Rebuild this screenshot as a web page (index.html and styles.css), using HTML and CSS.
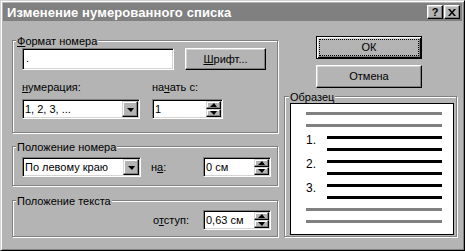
FILE: index.html
```html
<!DOCTYPE html>
<html>
<head>
<meta charset="utf-8">
<link rel="stylesheet" href="styles.css">
</head>
<body>
<div class="window">
  <div class="titlebar">
    <span class="title">Изменение нумерованного списка</span>
    <div class="tb-buttons">
      <span class="tb-btn help">?</span>
      <span class="tb-btn close"><svg width="8" height="7" viewBox="0 0 8 7"><path d="M0 0h2l2 2.5L6 0h2L5 3.5 8 7H6L4 4.5 2 7H0l3-3.5z" fill="#000"/></svg></span>
    </div>
  </div>
  <div class="content">
    <div class="left">
      <div class="group g1">
        <div class="legend"><u>Ф</u>ормат номера</div>
        <div class="row r1">
          <div class="edit fmt">.</div>
          <div class="btn font-btn"><u>Ш</u>рифт...</div>
        </div>
        <div class="row r2">
          <div class="field f-num">
            <div class="label"><u>н</u>умерация:</div>
            <div class="combo c-num"><span class="val">1, 2, 3, ...</span><span class="dd"><i class="tri-down"></i></span></div>
          </div>
          <div class="field f-start">
            <div class="label">на<u>ч</u>ать с:</div>
            <div class="spin s-start"><span class="val">1</span><span class="arrows"><span class="sbtn"><i class="tri-up"></i></span><span class="sbtn"><i class="tri-dn"></i></span></span></div>
          </div>
        </div>
      </div>
      <div class="group g2">
        <div class="legend">Положение номера</div>
        <div class="row r3">
          <div class="combo c-align"><span class="val">По левому краю</span><span class="dd"><i class="tri-down"></i></span></div>
          <div class="inline-label l-na">н<u>а</u>:</div>
          <div class="spin s-pos"><span class="val">0 см</span><span class="arrows"><span class="sbtn"><i class="tri-up"></i></span><span class="sbtn"><i class="tri-dn"></i></span></span></div>
        </div>
      </div>
      <div class="group g3">
        <div class="legend">Положение текста</div>
        <div class="row r4">
          <div class="inline-label l-ind">о<u>т</u>ступ:</div>
          <div class="spin s-pos"><span class="val">0,63 см</span><span class="arrows"><span class="sbtn"><i class="tri-up"></i></span><span class="sbtn"><i class="tri-dn"></i></span></span></div>
        </div>
      </div>
    </div>
    <div class="right">
      <div class="btn default ok"><span class="focus">ОК</span></div>
      <div class="btn cancel">Отмена</div>
      <div class="group sample">
        <div class="legend">Образец</div>
        <div class="preview">
          <div class="pline gray"></div>
          <div class="pline gray"></div>
          <div class="item"><span class="num">1.</span><div class="lines"><div class="pline black"></div><div class="pline black"></div></div></div>
          <div class="item"><span class="num">2.</span><div class="lines"><div class="pline black"></div><div class="pline black"></div></div></div>
          <div class="item"><span class="num">3.</span><div class="lines"><div class="pline black"></div><div class="pline black"></div></div></div>
          <div class="pline gray"></div>
          <div class="pline gray"></div>
        </div>
      </div>
    </div>
  </div>
</div>
</body>
</html>
```
FILE: styles.css
```css
* { box-sizing: border-box; }
html, body { margin: 0; padding: 0; }
body {
  font-family: "Liberation Sans", Arial, sans-serif;
  font-size: 11px;
  color: #000;
  background: #b4b4b4;
  width: 465px;
  height: 251px;
  overflow: hidden;
}
u { text-decoration: underline; text-underline-offset: 1px; }

.window {
  width: 465px;
  height: 251px;
  border: 1px solid;
  border-color: #d4d4d4 #000 #000 #d4d4d4;
  box-shadow: inset 1px 1px 0 #fff, inset -1px -1px 0 #808080;
  padding: 2px;
  background: #b4b4b4;
}

.titlebar {
  height: 18px;
  background: #808080;
  color: #fff;
  display: flex;
  align-items: center;
  padding: 0 2px 0 4px;
}
.title { font-weight: bold; font-size: 13px; line-height: 15px; letter-spacing: 0.1px; }
.tb-buttons { margin-left: auto; display: flex; gap: 1px; }
.tb-btn {
  width: 16px;
  height: 14px;
  background: #b4b4b4;
  border: 1px solid;
  border-color: #fff #000 #000 #fff;
  box-shadow: inset -1px -1px 0 #808080, inset 1px 1px 0 #d4d4d4;
  display: flex;
  align-items: center;
  justify-content: center;
  color: #000;
  font-weight: bold;
  font-size: 11px;
  line-height: 12px;
}

.content { display: flex; padding-left: 9px; }
.left { width: 266px; display: flex; flex-direction: column; }
.right { width: 173px; margin-left: 6px; display: flex; flex-direction: column; }

.group {
  border: 1px solid #808080;
  box-shadow: 1px 1px 0 #fff, inset 1px 1px 0 #fff;
}
.legend {
  margin: -7px 0 0 3px;
  padding: 0 1px;
  height: 14px;
  line-height: 14px;
  width: max-content;
  background: #b4b4b4;
}
.g1 { margin-top: 19px; height: 93px; }
.g2 { margin-top: 13px; height: 40px; }
.g3 { margin-top: 14px; height: 37px; }

.row { display: flex; padding-left: 9px; }
.r1 { gap: 11px; height: 22px; }
.r2 { margin-top: 11px; gap: 12px; }
.r3 { margin-top: 3px; align-items: center; }
.r4 { margin-top: 2px; align-items: center; justify-content: flex-end; padding-right: 6px; }

.label { line-height: 13px; height: 13px; margin-bottom: 5px; }
.inline-label { line-height: 13px; }
.l-na { width: 52px; margin-left: 10px; }
.l-ind { margin-right: 14px; }

.edit, .combo, .spin {
  background: #fff;
  border: 1px solid;
  border-color: #808080 #fff #fff #808080;
  box-shadow: inset 1px 1px 0 #000, inset -1px -1px 0 #d4d4d4;
  padding: 1px;
}
.edit.fmt { width: 152px; height: 22px; padding: 2px 3px; line-height: 14px; }

.btn {
  background: #b4b4b4;
  border: 1px solid;
  border-color: #fff #000 #000 #fff;
  box-shadow: inset -1px -1px 0 #808080, inset 1px 1px 0 #d4d4d4;
  display: flex;
  align-items: center;
  justify-content: center;
  line-height: 13px;
}
.font-btn { width: 81px; height: 22px; }

.combo, .spin { display: flex; height: 20px; }
.val { flex: 1; line-height: 16px; padding-left: 1px; white-space: nowrap; overflow: hidden; }
.c-num { width: 118px; }
.c-align { width: 119px; }
.s-start { width: 71px; }
.s-pos { width: 68px; }

.dd {
  width: 16px;
  height: 16px;
  background: #b4b4b4;
  border: 1px solid;
  border-color: #d4d4d4 #000 #000 #d4d4d4;
  box-shadow: inset -1px -1px 0 #808080, inset 1px 1px 0 #fff;
  display: flex;
  align-items: center;
  justify-content: center;
}
.tri-down {
  display: block;
  width: 0; height: 0;
  border-left: 4px solid transparent;
  border-right: 3px solid transparent;
  border-top: 4px solid #000;
  margin-top: 1px;
}
.arrows { width: 15px; display: flex; flex-direction: column; }
.sbtn {
  flex: 1;
  background: #b4b4b4;
  border: 1px solid;
  border-color: #d4d4d4 #000 #000 #d4d4d4;
  box-shadow: inset -1px -1px 0 #808080, inset 1px 1px 0 #fff;
  display: flex;
  align-items: center;
  justify-content: center;
}
.tri-up, .tri-dn {
  display: block;
  width: 0; height: 0;
  border-left: 4px solid transparent;
  border-right: 3px solid transparent;
}
.tri-up { border-bottom: 4px solid #000; }
.tri-dn { border-top: 4px solid #000; }

.ok { margin: 15px 0 0 32px; width: 106px; height: 23px; padding: 2px; }
.default {
  border: 1px solid #000;
  box-shadow: inset 1px 1px 0 #fff, inset -1px -1px 0 #000, inset 2px 2px 0 #d4d4d4, inset -2px -2px 0 #808080;
}
.focus {
  flex: 1;
  align-self: stretch;
  border: 1px dotted #000;
  display: flex;
  align-items: center;
  justify-content: center;
}
.cancel { margin: 6px 0 0 32px; width: 106px; height: 23px; }

.sample { margin-top: 8px; height: 141px; }
.sample .legend { margin-left: 4px; }
.preview {
  margin: -1px 0 0 5px;
  width: 164px;
  height: 132px;
  background: #fff;
  border: 1px solid #000;
  padding: 8px 11px 0 15px;
  display: flex;
  flex-direction: column;
  gap: 9px;
}
.pline { height: 3px; }
.pline.gray { background: #808080; }
.pline.black { background: #000; }
.item { display: flex; align-items: flex-start; }
.num { width: 21px; font-size: 12px; line-height: 12px; margin-top: -2px; height: 12px; margin-bottom: -10px; }
.lines { flex: 1; display: flex; flex-direction: column; gap: 9px; }
```
